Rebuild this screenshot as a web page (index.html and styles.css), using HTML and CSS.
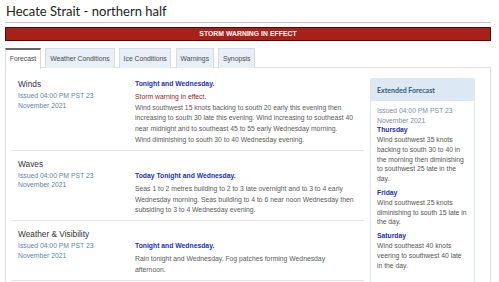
FILE: index.html
```html
<!DOCTYPE html>
<html lang="en">
<head>
<meta charset="utf-8">
<title>Hecate Strait - northern half</title>
<link rel="stylesheet" href="styles.css">
</head>
<body>
<div class="page">
  <h1 class="title">Hecate Strait - northern half</h1>
  <div class="alert">STORM WARNING IN EFFECT</div>
  <ul class="tabs">
    <li class="tab active">Forecast</li>
    <li class="tab">Weather Conditions</li>
    <li class="tab">Ice Conditions</li>
    <li class="tab">Warnings</li>
    <li class="tab">Synopsis</li>
  </ul>
  <div class="panel">
    <div class="main">
      <div class="row">
        <div class="left">
          <div class="label">Winds</div>
          <div class="issued">Issued 04:00 PM PST 23 November 2021</div>
        </div>
        <div class="right">
          <div class="period">Tonight and Wednesday.</div>
          <div class="warn">Storm warning in effect.</div>
          <div class="text">Wind southwest 15 knots backing to south 20 early this evening then increasing to south 30 late this evening. Wind increasing to southeast 40 near midnight and to southeast 45 to 55 early Wednesday morning. Wind diminishing to south 30 to 40 Wednesday evening.</div>
        </div>
      </div>
      <div class="row">
        <div class="left">
          <div class="label">Waves</div>
          <div class="issued">Issued 04:00 PM PST 23 November 2021</div>
        </div>
        <div class="right spaced">
          <div class="period">Today Tonight and Wednesday.</div>
          <div class="text">Seas 1 to 2 metres building to 2 to 3 late overnight and to 3 to 4 early Wednesday morning. Seas building to 4 to 6 near noon Wednesday then subsiding to 3 to 4 Wednesday evening.</div>
        </div>
      </div>
      <div class="row">
        <div class="left">
          <div class="label">Weather &amp; Visibility</div>
          <div class="issued">Issued 04:00 PM PST 23 November 2021</div>
        </div>
        <div class="right spaced">
          <div class="period">Tonight and Wednesday.</div>
          <div class="text">Rain tonight and Wednesday. Fog patches forming Wednesday afternoon.</div>
        </div>
      </div>
    </div>
    <aside class="extended">
      <div class="ext-head">Extended Forecast</div>
      <div class="ext-body">
        <div class="ext-issued">Issued 04:00 PM PST 23 November 2021</div>
        <div class="day">
          <div class="day-name">Thursday</div>
          <div class="day-text">Wind southwest 35 knots backing to south 30 to 40 in the morning then diminishing to southwest 25 late in the day.</div>
        </div>
        <div class="day">
          <div class="day-name">Friday</div>
          <div class="day-text">Wind southwest 25 knots diminishing to south 15 late in the day.</div>
        </div>
        <div class="day">
          <div class="day-name">Saturday</div>
          <div class="day-text">Wind southeast 40 knots veering to southwest 40 late in the day.</div>
        </div>
      </div>
    </aside>
  </div>
</div>
</body>
</html>
```
FILE: styles.css
```css
* { box-sizing: border-box; }
html, body { margin: 0; padding: 0; background: #fff; }
body {
  font-family: "Liberation Sans", Arial, sans-serif;
  font-size: 6.8px;
  color: #555;
  width: 499px;
  height: 282px;
  overflow: hidden;
}
.page { padding: 0 8px 0 5px; }
.title {
  margin: 0;
  padding: 3px 0 3px 1px;
  font-family: Lato, "Open Sans", sans-serif;
  font-weight: 400;
  font-size: 13px;
  line-height: 16px;
  color: #222;
  border-bottom: 1px solid #d7c2bf;
}
.alert {
  margin-top: 4px;
  height: 14px;
  background: #a8201a;
  border: 1px solid #4c0d09;
  color: #fff;
  font-weight: 700;
  font-size: 6.8px;
  line-height: 12px;
  text-align: center;
  letter-spacing: 0.05px;
}
.tabs {
  list-style: none;
  margin: 7px 0 0;
  padding: 0;
  display: flex;
  gap: 4.3px;
  position: relative;
  z-index: 1;
}
.tab {
  height: 20px;
  padding: 0 3.8px;
  line-height: 19px;
  background: #e9eff8;
  border: 1px solid #d5dce6;
  border-bottom: none;
  color: #4a4a4a;
}
.tab.active {
  background: #fff;
  border-top: 2px solid #666;
  line-height: 18px;
  margin-bottom: -1px;
  height: 21px;
}
.panel {
  display: flex;
  align-items: flex-start;
  gap: 6px;
  border: 1px solid #e2e2e2;
  border-bottom: none;
  padding: 4px 16px 0 5px;
  margin-top: -1px;
  height: 230px;
}
.main { flex: 0 0 353px; }
.row {
  display: flex;
  padding: 7px 7px 4px;
  border-bottom: 1px solid #e4e4e4;
}
.row + .row { padding-top: 8px; }
.left { flex: 0 0 117px; padding-right: 36px; }
.label {
  font-size: 8.3px;
  line-height: 10px;
  color: #333;
}
.issued {
  margin-top: 2.3px;
  line-height: 9.5px;
  color: #6384ad;
}
.right { flex: 0 0 219px; }
.right.spaced { padding-top: 12.3px; }
.period {
  font-weight: 700;
  color: #2231b4;
  line-height: 10.7px;
  margin-bottom: 2.3px;
}
.warn { color: #8f1f1f; line-height: 10.7px; }
.text { line-height: 10.7px; color: #5a5a5a; }
.extended {
  flex: 0 0 105px;
  margin-top: 6px;
  border: 1px solid #dde8ef;
  border-radius: 2px;
  min-height: 202px;
}
.ext-head {
  height: 22px;
  background: #dce9f4;
  padding: 0 6px;
  font-family: Lato, "Open Sans", sans-serif;
  font-weight: 700;
  font-size: 7px;
  line-height: 22px;
  color: #3b5876;
}
.ext-body { padding: 5px 6px 10px 6px; line-height: 9.7px; }
.ext-issued { color: #7d8ea4; }
.day { margin-bottom: 4.5px; }
.day-name { font-weight: 700; color: #2231b4; }
.day-text { color: #555; }
```
